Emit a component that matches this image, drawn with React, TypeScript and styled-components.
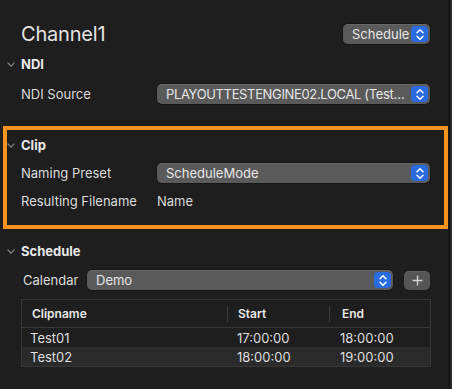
import styled, { createGlobalStyle } from 'styled-components'

const Global = createGlobalStyle`
  html, body {
    margin: 0;
    background: #2a2a2a;
  }
  body {
    font-family: Inter, "Noto Sans", "Liberation Sans", sans-serif;
    -webkit-font-smoothing: antialiased;
  }
`

const Page = styled.div`
  width: 450px;
  height: 389px;
  box-sizing: border-box;
  background: #1e1e1e;
  border-right: 1px solid #0c0c0c;
  display: flex;
  flex-direction: column;
  color: #dcdcdc;
  font-size: 13px;
  overflow: hidden;
`

const TitleRow = styled.div`
  margin-top: 22px;
  height: 24px;
  padding: 0 19px 0 21px;
  display: flex;
  align-items: center;
  justify-content: space-between;
`

const Title = styled.div`
  font-size: 20px;
  font-weight: 400;
  color: #e4e4e4;
  letter-spacing: -0.2px;
`

const SectionHeader = styled.div<{ $inset: number; $top: number }>`
  margin-top: ${p => p.$top}px;
  height: 20px;
  padding-left: ${p => p.$inset}px;
  display: flex;
  align-items: center;
  gap: 6px;
  font-weight: 700;
  color: #e8e8e8;
`

const FormRow = styled.div<{ $left: number; $right: number; $top: number }>`
  margin-top: ${p => p.$top}px;
  height: 20px;
  padding: 0 ${p => p.$right}px 0 ${p => p.$left}px;
  display: grid;
  grid-template-columns: 136px 1fr;
  align-items: center;
`

const Label = styled.span`
  color: #dcdcdc;
  white-space: nowrap;
`

const Popup = styled.div<{ $width?: number }>`
  height: 20px;
  ${p => (p.$width ? `width: ${p.$width}px;` : 'flex: 1;')}
  box-sizing: border-box;
  background: #5a5a5a;
  border-radius: 5px;
  box-shadow: inset 0 0.5px 0 rgba(255, 255, 255, 0.18), 0 0 0 0.5px rgba(0, 0, 0, 0.5);
  display: flex;
  align-items: center;
  padding: 0 2px 0 9px;
  min-width: 0;
`

const PopupText = styled.span<{ $tight?: boolean }>`
  flex: 1;
  color: #e6e6e6;
  white-space: nowrap;
  overflow: hidden;
  letter-spacing: ${p => (p.$tight ? '-0.35px' : 'normal')};
`

const Stepper = styled.span`
  width: 17px;
  height: 16px;
  border-radius: 4px;
  background: #2b6be0;
  display: flex;
  align-items: center;
  justify-content: center;
  flex-shrink: 0;
`

const Highlight = styled.div`
  margin: 22px 1px 0 3px;
  border: 4px solid #f7941d;
  padding: 5px 0 14px 0;
  display: flex;
  flex-direction: column;
`

const CalendarRow = styled.div`
  margin-top: 9px;
  height: 20px;
  padding: 0 19px 0 23px;
  display: flex;
  align-items: center;
`

const CalendarLabel = styled(Label)`
  width: 64px;
`

const PlusButton = styled.div`
  margin-left: 11px;
  width: 26px;
  height: 19px;
  border-radius: 5px;
  background: #555555;
  box-shadow: inset 0 0.5px 0 rgba(255, 255, 255, 0.15);
  display: flex;
  align-items: center;
  justify-content: center;
`

const Table = styled.div`
  margin: 9px 18px 0 21px;
  border: 1px solid #373737;
  background: #1e1e1e;
`

const Columns = styled.div<{ $head?: boolean; $alt?: boolean }>`
  display: grid;
  grid-template-columns: 205px 102px 1fr;
  align-items: center;
  height: ${p => (p.$head ? 27 : 19)}px;
  background: ${p => (p.$alt ? '#2a2a2a' : 'transparent')};
  ${p => p.$head && 'border-bottom: 1px solid #373737;'}
`

const HeadCell = styled.div<{ $divider?: boolean; $pad: number }>`
  height: 100%;
  display: flex;
  align-items: center;
  padding-left: ${p => p.$pad}px;
  font-size: 12px;
  font-weight: 600;
  color: #e8e8e8;
  ${p => p.$divider && 'background: linear-gradient(#3c3c3c, #3c3c3c) no-repeat left center / 1px 16px;'}
`

const Cell = styled.div<{ $pad: number }>`
  padding-left: ${p => p.$pad}px;
  color: #dedede;
  white-space: nowrap;
`

function Chevron() {
  return (
    <svg width="8" height="5" viewBox="0 0 8 5">
      <polyline points="0.6,0.6 4,4.2 7.4,0.6" fill="none" stroke="#8c8c8c" strokeWidth="1.1" />
    </svg>
  )
}

function StepIcon() {
  return (
    <svg width="10" height="13" viewBox="0 0 10 13">
      <polyline points="2,4.8 5,1.8 8,4.8" fill="none" stroke="#fff" strokeWidth="1.5" strokeLinecap="round" strokeLinejoin="round" />
      <polyline points="2,8.2 5,11.2 8,8.2" fill="none" stroke="#fff" strokeWidth="1.5" strokeLinecap="round" strokeLinejoin="round" />
    </svg>
  )
}

function Select({ value, width, tight }: { value: string; width?: number; tight?: boolean }) {
  return (
    <Popup $width={width}>
      <PopupText $tight={tight}>{value}</PopupText>
      <Stepper>
        <StepIcon />
      </Stepper>
    </Popup>
  )
}

const rows = [
  { name: 'Test01', start: '17:00:00', end: '18:00:00' },
  { name: 'Test02', start: '18:00:00', end: '19:00:00' },
]

export default function App() {
  return (
    <Page>
      <Global />
      <TitleRow>
        <Title>Channel1</Title>
        <Select value="Schedule" width={87} />
      </TitleRow>

      <SectionHeader $inset={7} $top={8}>
        <Chevron />
        NDI
      </SectionHeader>
      <FormRow $left={21} $right={19} $top={10}>
        <Label>NDI Source</Label>
        <Select value="PLAYOUTTESTENGINE02.LOCAL (Test…" tight />
      </FormRow>

      <Highlight>
        <SectionHeader $inset={0} $top={0}>
          <Chevron />
          Clip
        </SectionHeader>
        <FormRow $left={14} $right={14} $top={8}>
          <Label>Naming Preset</Label>
          <Select value="ScheduleMode" />
        </FormRow>
        <FormRow $left={14} $right={14} $top={8}>
          <Label>Resulting Filename</Label>
          <Label>Name</Label>
        </FormRow>
      </Highlight>

      <SectionHeader $inset={7} $top={12}>
        <Chevron />
        Schedule
      </SectionHeader>
      <CalendarRow>
        <CalendarLabel>Calendar</CalendarLabel>
        <Select value="Demo" />
        <PlusButton>
          <svg width="11" height="11" viewBox="0 0 11 11">
            <path d="M5.5 0.5v10M0.5 5.5h10" stroke="#d2d2d2" strokeWidth="1.4" />
          </svg>
        </PlusButton>
      </CalendarRow>

      <Table>
        <Columns $head>
          <HeadCell $pad={10}>Clipname</HeadCell>
          <HeadCell $pad={11} $divider>Start</HeadCell>
          <HeadCell $pad={13} $divider>End</HeadCell>
        </Columns>
        {rows.map((r, i) => (
          <Columns key={r.name} $alt={i % 2 === 1}>
            <Cell $pad={8}>{r.name}</Cell>
            <Cell $pad={10}>{r.start}</Cell>
            <Cell $pad={11}>{r.end}</Cell>
          </Columns>
        ))}
      </Table>
    </Page>
  )
}
